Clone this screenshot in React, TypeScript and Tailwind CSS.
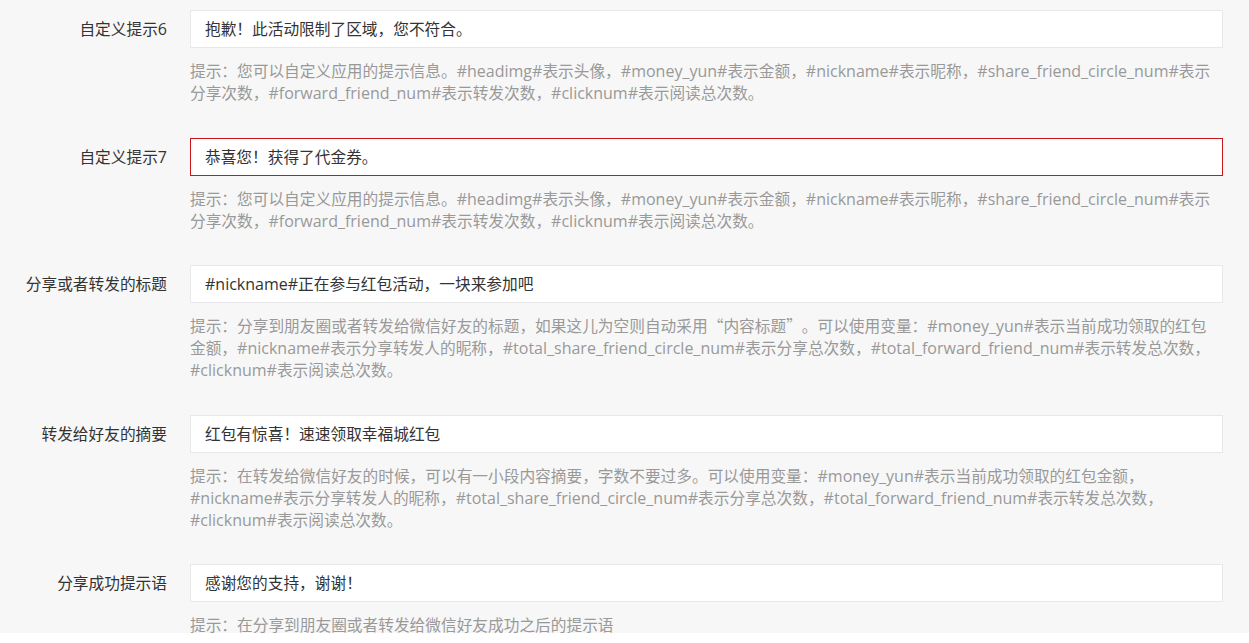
import React from "react";

type Row = { label: string; value: string; hint: string; error?: boolean };

const rows: Row[] = [
  {
    label: "自定义提示6",
    value: "抱歉！此活动限制了区域，您不符合。",
    hint: "提示：您可以自定义应用的提示信息。#headimg#表示头像，#money_yun#表示金额，#nickname#表示昵称，#share_friend_circle_num#表示分享次数，#forward_friend_num#表示转发次数，#clicknum#表示阅读总次数。",
  },
  {
    label: "自定义提示7",
    value: "恭喜您！获得了代金券。",
    hint: "提示：您可以自定义应用的提示信息。#headimg#表示头像，#money_yun#表示金额，#nickname#表示昵称，#share_friend_circle_num#表示分享次数，#forward_friend_num#表示转发次数，#clicknum#表示阅读总次数。",
    error: true,
  },
  {
    label: "分享或者转发的标题",
    value: "#nickname#正在参与红包活动，一块来参加吧",
    hint: "提示：分享到朋友圈或者转发给微信好友的标题，如果这儿为空则自动采用“内容标题”。可以使用变量：#money_yun#表示当前成功领取的红包金额，#nickname#表示分享转发人的昵称，#total_share_friend_circle_num#表示分享总次数，#total_forward_friend_num#表示转发总次数，#clicknum#表示阅读总次数。",
  },
  {
    label: "转发给好友的摘要",
    value: "红包有惊喜！速速领取幸福城红包",
    hint: "提示：在转发给微信好友的时候，可以有一小段内容摘要，字数不要过多。可以使用变量：#money_yun#表示当前成功领取的红包金额，#nickname#表示分享转发人的昵称，#total_share_friend_circle_num#表示分享总次数，#total_forward_friend_num#表示转发总次数，#clicknum#表示阅读总次数。",
  },
  {
    label: "分享成功提示语",
    value: "感谢您的支持，谢谢！",
    hint: "提示：在分享到朋友圈或者转发给微信好友成功之后的提示语",
  },
];

function T({ text }: { text: string }) {
  const parts = text.split(/([\x20-\x7e]+|[“”])/);
  return (
    <>
      {parts.map((p, i) => {
        if (p === "") return null;
        if (p === "“")
          return (
            <span key={i} className="inline-block w-[1em] text-right leading-[16px]">
              {p}
            </span>
          );
        if (p === "”")
          return (
            <span key={i} className="inline-block w-[1em] text-left leading-[16px]">
              {p}
            </span>
          );
        if (/^[\x20-\x7e]+$/.test(p))
          return (
            <span
              key={i}
              className="text-[16px] leading-[16px]"
              style={{ fontFamily: '"Open Sans", sans-serif' }}
            >
              {p}
            </span>
          );
        return <React.Fragment key={i}>{p}</React.Fragment>;
      })}
    </>
  );
}

export default function App() {
  return (
    <div
      className="w-full h-[643px] bg-white overflow-hidden"
      style={{ fontFamily: '"Noto Sans CJK SC", "Open Sans", sans-serif' }}
    >
      <div className="h-[633px] bg-[#f7f7f7] overflow-hidden pt-[10px]">
        {rows.map((r, i) => (
          <div key={i} className="flex mb-[33.5px]">
            <div className="w-[167px] shrink-0 h-[38px] flex items-center justify-end text-[15.7px] text-[#333]">
              <span>
                <T text={r.label} />
              </span>
            </div>
            <div className="ml-[23px] w-[1033px]">
              <div
                className={
                  r.error
                    ? "h-[38px] bg-white border border-[#c9171e] flex items-center pl-[14px] text-[15.7px] text-[#333]"
                    : "h-[38px] bg-white border border-[#e8e8e8] flex items-center pl-[14px] text-[15.7px] text-[#333]"
                }
              >
                <span>
                  <T text={r.value} />
                </span>
              </div>
              <div className="mt-[12px] pr-[9px] text-[15.7px] leading-[22px] text-[#999]">
                <T text={r.hint} />
              </div>
            </div>
          </div>
        ))}
      </div>
    </div>
  );
}
